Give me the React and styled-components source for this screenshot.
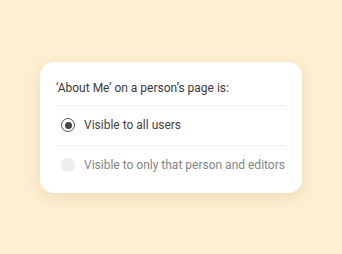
import styled, { createGlobalStyle } from "styled-components";

const GlobalStyle = createGlobalStyle`
    html, body {
        margin: 0;
        padding: 0;
        background-color: #fdefd3;
    }
    body {
        font-family: Roboto, "Liberation Sans", sans-serif;
    }
`

const options = [
    { label: "Visible to all users", checked: true },
    { label: "Visible to only that person and editors", checked: false },
];

export default function App() {
    return (
        <Page>
            <GlobalStyle />
            <Card>
                <Question>‘About Me’ on a person’s page is:</Question>
                {options.map((opt) => (
                    <Option key={opt.label}>
                        <Radio checked={opt.checked} />
                        <Label checked={opt.checked}>{opt.label}</Label>
                    </Option>
                ))}
            </Card>
        </Page>
    );
}

const Page = styled.div`
    width: 342px;
    height: 254px;
    display: flex;
    align-items: center;
    justify-content: center;
`

const Card = styled.div`
    width: 262px;
    box-sizing: border-box;
    padding: 18px 16px 8px;
    background-color: #fff;
    border-radius: 14px;
    box-shadow: 0 4px 14px rgba(200, 160, 90, 0.25);
`

const Question = styled.div`
    font-size: 12px;
    line-height: 16px;
    color: #3a3a3a;
    padding-bottom: 9px;
    border-bottom: 1px solid #efefef;
`

const Option = styled.div`
    display: flex;
    align-items: center;
    gap: 9px;
    height: 39px;
    & + & {
        border-top: 1px solid #efefef;
    }
`

const Radio = styled.span`
    flex-shrink: 0;
    width: 14px;
    height: 14px;
    margin-left: 5px;
    box-sizing: border-box;
    border-radius: 50%;
    display: flex;
    align-items: center;
    justify-content: center;
    background-color: ${(p) => (p.checked ? "#fff" : "#eeeeee")};
    border: ${(p) => (p.checked ? "1.5px solid #555" : "none")};

    &::after {
        content: "";
        display: ${(p) => (p.checked ? "block" : "none")};
        width: 7px;
        height: 7px;
        border-radius: 50%;
        background-color: #444;
    }
`

const Label = styled.span`
    font-size: 12px;
    white-space: nowrap;
    color: ${(p) => (p.checked ? "#444" : "#858585")};
`
